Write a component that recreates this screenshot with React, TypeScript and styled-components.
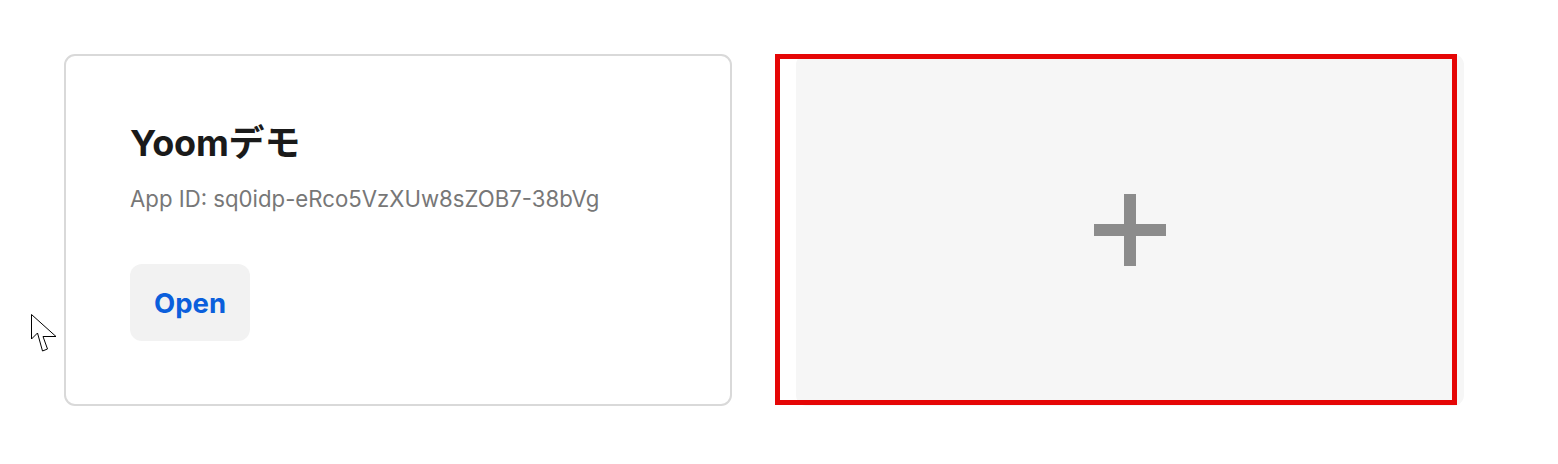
import { FC } from "react";
import styled, { createGlobalStyle } from "styled-components";

const GlobalStyle = createGlobalStyle`
  html, body {
    margin: 0;
    padding: 0;
    background: #ffffff;
    font-family: Inter, "Noto Sans CJK JP", "Noto Sans", sans-serif;
  }
`;

const Page = styled.div`
  position: relative;
  width: 1558px;
  height: 464px;
  box-sizing: border-box;
  padding: 54px 0 0 64px;
`;

const Grid = styled.div`
  display: grid;
  grid-template-columns: 668px 668px;
  gap: 64px;
`;

const Card = styled.div`
  box-sizing: border-box;
  height: 352px;
  border: 2px solid #d9d9d9;
  border-radius: 11px;
  background: #ffffff;
  padding: 63px 64px;
  display: flex;
  flex-direction: column;
  align-items: flex-start;
`;

const Title = styled.h2`
  margin: 0;
  font-size: 36px;
  line-height: 48px;
  font-weight: 700;
  color: #1a1a1a;
  letter-spacing: -0.2px;
`;

const AppId = styled.p`
  margin: 17px 0 0;
  font-size: 22.2px;
  line-height: 30px;
  color: #777777;
`;

const OpenButton = styled.button`
  margin-top: 50px;
  height: 80px;
  padding: 0 24px;
  border: none;
  border-radius: 12px;
  background: #f2f2f2;
  color: #0b5fdc;
  font-family: inherit;
  font-size: 27.5px;
  font-weight: 700;
  cursor: pointer;
`;

const AddPanel = styled.div`
  position: relative;
  box-sizing: border-box;
  height: 352px;
  border-radius: 11px;
  background: #f6f6f6;
  display: flex;
  align-items: center;
  justify-content: center;
`;

const Highlight = styled.div`
  position: absolute;
  left: -21px;
  top: 0;
  width: 682px;
  height: 351px;
  box-sizing: border-box;
  border: 5px solid #e50606;
  pointer-events: none;
`;

const Cursor = styled.svg`
  position: absolute;
  left: 30px;
  top: 313px;
`;

const PlusIcon: FC = () => (
  <svg width="72" height="72" viewBox="0 0 72 72">
    <rect x="30" y="0" width="12" height="72" fill="#8c8c8c" />
    <rect x="0" y="30" width="72" height="12" fill="#8c8c8c" />
  </svg>
);

const App: FC = () => (
  <>
    <GlobalStyle />
    <Page>
      <Grid>
        <Card>
          <Title>Yoomデモ</Title>
          <AppId>App ID: sq0idp-eRco5VzXUw8sZOB7-38bVg</AppId>
          <OpenButton>Open</OpenButton>
        </Card>
        <AddPanel>
          <PlusIcon />
          <Highlight />
        </AddPanel>
      </Grid>
      <Cursor width="28" height="42" viewBox="0 0 28 42">
        <path
          d="M1.5 1.5 L1.5 26 L7.5 20 L12.5 38 L17.5 36 L13 23.5 L26 23.5 Z"
          fill="#ffffff"
          stroke="#000000"
          strokeWidth="1"
          strokeLinejoin="miter"
        />
      </Cursor>
    </Page>
  </>
);

export default App;
